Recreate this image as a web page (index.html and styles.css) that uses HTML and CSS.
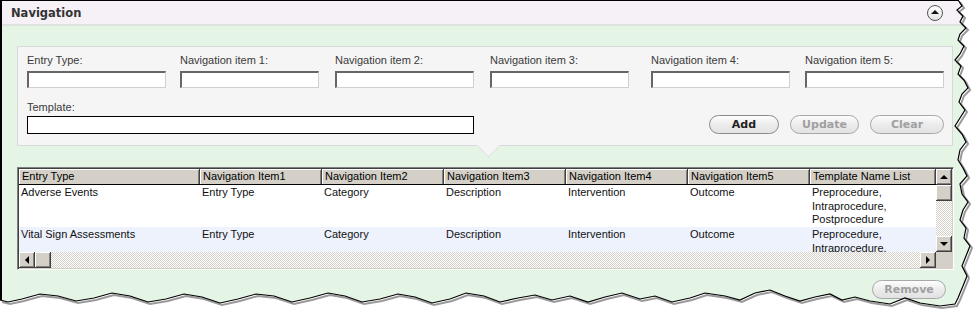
FILE: index.html
```html
<!DOCTYPE html>
<html lang="en">
<head>
    <meta charset="UTF-8">
    <title>Navigation</title>
    <link rel="stylesheet" href="styles.css">
</head>
<body>
    <div class="shot">
        <div class="window">
            <!-- Section header -->
            <div class="header">
                <span class="title">Navigation</span>
                <span class="collapse"><span class="arrow-up"></span></span>
            </div>

            <div class="content">
                <!-- Entry form -->
                <div class="panel">
                    <div class="field-row">
                        <div class="field"><label>Entry Type:</label><input type="text"></div>
                        <div class="field"><label>Navigation item 1:</label><input type="text"></div>
                        <div class="field"><label>Navigation item 2:</label><input type="text"></div>
                        <div class="field"><label>Navigation item 3:</label><input type="text"></div>
                        <div class="field"><label>Navigation item 4:</label><input type="text"></div>
                        <div class="field"><label>Navigation item 5:</label><input type="text"></div>
                    </div>
                    <div class="template-row">
                        <div class="field field-wide"><label>Template:</label><input type="text" class="template-input"></div>
                        <div class="buttons">
                            <button class="pill btn-add">Add</button>
                            <button class="pill btn-update" disabled>Update</button>
                            <button class="pill btn-clear" disabled>Clear</button>
                        </div>
                    </div>
                </div>

                <!-- Grid -->
                <div class="grid">
                    <div class="grid-main">
                        <div class="grid-view">
                            <div class="grid-row grid-head">
                                <div class="cell c1">Entry Type</div>
                                <div class="cell c2">Navigation Item1</div>
                                <div class="cell c2">Navigation Item2</div>
                                <div class="cell c2">Navigation Item3</div>
                                <div class="cell c2">Navigation Item4</div>
                                <div class="cell c2">Navigation Item5</div>
                                <div class="cell c3">Template Name List</div>
                            </div>
                            <div class="grid-body">
                                <div class="grid-row row-tall">
                                    <div class="cell c1">Adverse Events</div>
                                    <div class="cell c2">Entry Type</div>
                                    <div class="cell c2">Category</div>
                                    <div class="cell c2">Description</div>
                                    <div class="cell c2">Intervention</div>
                                    <div class="cell c2">Outcome</div>
                                    <div class="cell c3">Preprocedure,<br>Intraprocedure,<br>Postprocedure</div>
                                </div>
                                <div class="grid-row row-tall row-alt">
                                    <div class="cell c1">Vital Sign Assessments</div>
                                    <div class="cell c2">Entry Type</div>
                                    <div class="cell c2">Category</div>
                                    <div class="cell c2">Description</div>
                                    <div class="cell c2">Intervention</div>
                                    <div class="cell c2">Outcome</div>
                                    <div class="cell c3">Preprocedure,<br>Intraprocedure,<br>Postprocedure</div>
                                </div>
                            </div>
                        </div>
                        <div class="vscroll">
                            <div class="sb-btn"><span class="tri tri-up"></span></div>
                            <div class="sb-btn sb-thumb"></div>
                            <div class="sb-track"></div>
                            <div class="sb-btn"><span class="tri tri-down"></span></div>
                        </div>
                    </div>
                    <div class="hscroll-row">
                        <div class="hscroll">
                            <div class="sb-btn"><span class="tri tri-left"></span></div>
                            <div class="sb-btn sb-thumb"></div>
                            <div class="sb-track"></div>
                            <div class="sb-btn"><span class="tri tri-right"></span></div>
                        </div>
                        <div class="sb-corner"></div>
                    </div>
                </div>

                <div class="footer">
                    <button class="pill btn-remove" disabled>Remove</button>
                </div>
            </div>
        </div>

        <!-- Torn screenshot edge -->
        <svg class="torn" width="980" height="321" viewBox="0 0 980 321">
            <path fill="#fff" d="M980 0 L958 0 L962 6 L957 10 L963 16 L960 22 L966 28 L960 34 L958 40 L964 46 L960 54 L955 60 L961 66 L958 74 L964 80 L968 88 L962 94 L959 102 L965 110 L960 118 L955 126 L962 134 L966 142 L960 150 L958 160 L963 168 L967 176 L960 184 L962 194 L968 202 L963 210 L960 220 L966 228 L964 238 L970 246 L966 256 L962 266 L967 276 L963 286 L958 298 L955 304 L940 306 L920 303 L905 298 L890 304 L870 301 L855 297 L842 300 L830 294 L815 297 L800 301 L785 296 L770 290 L755 293 L740 300 L725 296 L705 293 L690 298 L672 302 L655 296 L640 299 L622 293 L605 297 L588 302 L570 296 L552 300 L535 295 L518 298 L500 302 L484 296 L466 293 L450 299 L432 303 L415 297 L398 294 L380 299 L362 302 L345 296 L328 293 L310 298 L292 302 L274 296 L256 294 L238 299 L220 303 L202 297 L184 294 L166 299 L148 302 L130 296 L112 293 L94 298 L76 301 L58 296 L40 294 L22 299 L8 302 L0 300 L0 321 L980 321 Z"/>
            <polyline class="torn-shadow" fill="none" points="958,0 962,6 957,10 963,16 960,22 966,28 960,34 958,40 964,46 960,54 955,60 961,66 958,74 964,80 968,88 962,94 959,102 965,110 960,118 955,126 962,134 966,142 960,150 958,160 963,168 967,176 960,184 962,194 968,202 963,210 960,220 966,228 964,238 970,246 966,256 962,266 967,276 963,286 958,298 955,304 940,306 920,303 905,298 890,304 870,301 855,297 842,300 830,294 815,297 800,301 785,296 770,290 755,293 740,300 725,296 705,293 690,298 672,302 655,296 640,299 622,293 605,297 588,302 570,296 552,300 535,295 518,298 500,302 484,296 466,293 450,299 432,303 415,297 398,294 380,299 362,302 345,296 328,293 310,298 292,302 274,296 256,294 238,299 220,303 202,297 184,294 166,299 148,302 130,296 112,293 94,298 76,301 58,296 40,294 22,299 8,302 0,300"/>
            <polyline class="torn-line" fill="none" points="958,0 962,6 957,10 963,16 960,22 966,28 960,34 958,40 964,46 960,54 955,60 961,66 958,74 964,80 968,88 962,94 959,102 965,110 960,118 955,126 962,134 966,142 960,150 958,160 963,168 967,176 960,184 962,194 968,202 963,210 960,220 966,228 964,238 970,246 966,256 962,266 967,276 963,286 958,298 955,304 940,306 920,303 905,298 890,304 870,301 855,297 842,300 830,294 815,297 800,301 785,296 770,290 755,293 740,300 725,296 705,293 690,298 672,302 655,296 640,299 622,293 605,297 588,302 570,296 552,300 535,295 518,298 500,302 484,296 466,293 450,299 432,303 415,297 398,294 380,299 362,302 345,296 328,293 310,298 292,302 274,296 256,294 238,299 220,303 202,297 184,294 166,299 148,302 130,296 112,293 94,298 76,301 58,296 40,294 22,299 8,302 0,300"/>
        </svg>
    </div>
</body>
</html>
```

FILE: styles.css
```css
/* Page */
body {
    margin: 0;
    padding: 0;
    background-color: #fff;
    font-family: 'Liberation Sans', Arial, sans-serif;
}

.shot {
    position: relative;
    width: 980px;
    height: 321px;
    overflow: hidden;
    background-color: #fff;
}

.window {
    height: 321px;
    border-top: 1px solid #000;
    border-left: 2px solid #000;
    box-sizing: border-box;
    background-color: #e5f5e5; /* Light Green */
}

/* Header */
.header {
    height: 23px;
    display: flex;
    align-items: center;
    justify-content: space-between;
    padding: 0 37px 0 9px;
    background-color: #f6f1f6;
    border-bottom: 2px solid #dfe3df;
}

.title {
    font-family: 'DejaVu Sans', sans-serif;
    font-weight: bold;
    font-size: 11.5px;
    color: #333;
}

.collapse {
    width: 14px;
    height: 14px;
    border: 1px solid #555;
    border-radius: 50%;
    background: linear-gradient(#fff, #e4e4e4);
    display: flex;
    align-items: center;
    justify-content: center;
}

.arrow-up {
    width: 0;
    height: 0;
    border-left: 4px solid transparent;
    border-right: 4px solid transparent;
    border-bottom: 4px solid #111;
    margin-top: -1px;
}

/* Content */
.content {
    padding: 20px 0 0 15px;
}

.panel {
    position: relative;
    width: 936px;
    box-sizing: border-box;
    background-color: #f5f5f5;
    border: 1px solid #d8d8d8;
    padding: 6px 9px 11px 9px;
}

/* Notch below form */
.panel::after {
    content: '';
    position: absolute;
    left: 462px;
    bottom: -9px;
    width: 16px;
    height: 16px;
    background-color: #f5f5f5;
    border-right: 1px solid #e2e2e2;
    border-bottom: 1px solid #e2e2e2;
    transform: rotate(45deg);
}

.field-row {
    display: grid;
    grid-template-columns: 153px 155px 155px 161px 154px 139px;
}

.field label {
    display: block;
    height: 14px;
    line-height: 14px;
    font-size: 11px;
    color: #3a3a3a;
    margin-bottom: 4px;
}

.field input {
    display: block;
    width: 139px;
    height: 17px;
    box-sizing: border-box;
    margin: 0;
    padding: 0;
    background-color: #fff;
    border-style: solid;
    border-width: 2px 1px 1px 2px;
    border-color: #666 #d0d0d0 #d0d0d0 #666;
}

.template-row {
    display: flex;
    align-items: flex-end;
    margin-top: 12px;
}

.template-row .field label {
    margin-bottom: 2px;
}

.field input.template-input {
    width: 447px;
    height: 18px;
    border: 1px solid #000;
}

.buttons {
    margin-left: auto;
    display: flex;
    gap: 11px;
    margin-right: -1px;
}

/* Pill buttons */
.pill {
    height: 19px;
    padding: 0;
    border: 1px solid #8a8a8a;
    border-radius: 10px;
    background: linear-gradient(#fdfdfd, #ececec 50%, #e2e2e2);
    font-family: 'DejaVu Sans', sans-serif;
    font-weight: bold;
    font-size: 11px;
    color: #222;
    line-height: 17px;
}

.pill:disabled {
    color: #a0a0a0;
    border-color: #a8a8a8;
}

.btn-add { width: 70px; }
.btn-update { width: 69px; }
.btn-clear { width: 74px; }
.btn-remove { width: 74px; }

/* Grid */
.grid {
    margin-top: 21px;
    width: 937px;
    box-sizing: border-box;
    border: 1px solid;
    border-color: #808080 #fff #fff #808080;
    box-shadow: inset 1px 1px #404040, inset -1px -1px #d4d0c8;
    padding: 1px;
    background-color: #fff;
}

.grid-main {
    display: flex;
}

.grid-view {
    width: 917px;
    height: 83px;
    overflow: hidden;
    font-size: 11px;
    color: #111;
}

.grid-row {
    display: flex;
}

.cell {
    flex: none;
    box-sizing: border-box;
    padding-left: 2px;
    white-space: nowrap;
    overflow: hidden;
}

.c1 { width: 181px; }
.c2 { width: 122px; }
.c3 { width: 126px; }

.grid-head {
    height: 16px;
    background-color: #d4d0c8;
    border-bottom: 1px solid #000;
    box-sizing: border-box;
}

.grid-head .cell {
    line-height: 15px;
    color: #000;
    border-right: 1px solid #404040;
    box-shadow: inset 1px 1px #fff, inset -1px 0 #808080;
    padding-left: 3px;
}

.grid-body .cell {
    line-height: 13.5px;
    padding-top: 1px;
}

.row-tall {
    height: 42px;
}

.row-alt {
    background-color: #eef2fd;
}

/* Scrollbars */
.vscroll {
    width: 16px;
    display: flex;
    flex-direction: column;
}

.hscroll-row {
    display: flex;
    height: 16px;
}

.hscroll {
    flex: 1;
    display: flex;
}

.sb-btn {
    flex: none;
    width: 16px;
    height: 16px;
    box-sizing: border-box;
    background-color: #d4d0c8;
    box-shadow: inset -1px -1px #404040, inset 1px 1px #fff, inset -2px -2px #808080;
    display: flex;
    align-items: center;
    justify-content: center;
}

.sb-track {
    flex: 1;
    background-color: #fff;
    background-image: repeating-conic-gradient(#d4d0c8 0 25%, #fff 0 50%);
    background-size: 2px 2px;
}

.sb-corner {
    width: 16px;
    background-color: #d4d0c8;
}

.tri {
    width: 0;
    height: 0;
}

.tri-up {
    border-left: 4px solid transparent;
    border-right: 4px solid transparent;
    border-bottom: 4px solid #000;
}

.tri-down {
    border-left: 4px solid transparent;
    border-right: 4px solid transparent;
    border-top: 4px solid #000;
}

.tri-left {
    border-top: 4px solid transparent;
    border-bottom: 4px solid transparent;
    border-right: 4px solid #000;
}

.tri-right {
    border-top: 4px solid transparent;
    border-bottom: 4px solid transparent;
    border-left: 4px solid #000;
}

/* Footer */
.footer {
    width: 929px;
    display: flex;
    justify-content: flex-end;
    margin-top: 10px;
}

/* Torn edge overlay */
.torn {
    position: absolute;
    top: 0;
    left: 0;
}

.torn-shadow {
    stroke: #9a9a9a;
    stroke-width: 2;
    transform: translate(2px, 2px);
}

.torn-line {
    stroke: #000;
    stroke-width: 1.2;
}
```
